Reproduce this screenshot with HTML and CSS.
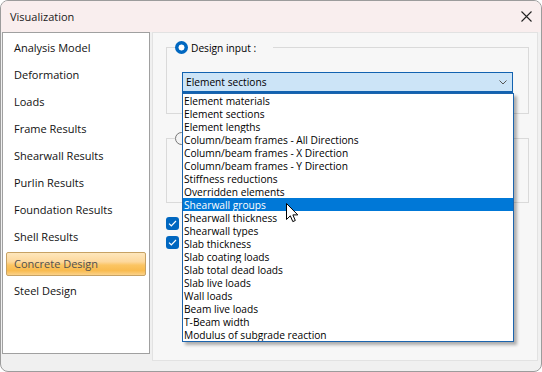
FILE: index.html
```html
<!DOCTYPE html>
<html>
<head>
<meta charset="utf-8">
<link rel="stylesheet" href="styles.css">
</head>
<body>
<div class="window">
  <div class="titlebar">
    <span class="title">Visualization</span>
    <svg class="close" width="11" height="11" viewBox="0 0 11 11"><path d="M0.5 0.5 L10.5 10.5 M10.5 0.5 L0.5 10.5" stroke="#222" stroke-width="1.1" fill="none"/></svg>
  </div>
  <div class="content">
    <ul class="nav">
      <li class="nav-item">Analysis Model</li>
      <li class="nav-item">Deformation</li>
      <li class="nav-item">Loads</li>
      <li class="nav-item">Frame Results</li>
      <li class="nav-item">Shearwall Results</li>
      <li class="nav-item">Purlin Results</li>
      <li class="nav-item">Foundation Results</li>
      <li class="nav-item">Shell Results</li>
      <li class="nav-item selected">Concrete Design</li>
      <li class="nav-item">Steel Design</li>
    </ul>
    <div class="panel">
      <fieldset class="group g1">
        <legend class="legend"><span class="opt"><span class="radio on"></span><span>Design input :</span></span></legend>
        <div class="group-body g1-body">
          <div class="combo">
            <span>Element sections</span>
            <svg class="chev" width="8" height="5" viewBox="0 0 8 5"><path d="M0.5 0.5 L4 4 L7.5 0.5" stroke="#555" stroke-width="1" fill="none"/></svg>
            <ul class="dropdown">
              <li>Element materials</li>
              <li>Element sections</li>
              <li>Element lengths</li>
              <li>Column/beam frames - All Directions</li>
              <li>Column/beam frames - X Direction</li>
              <li>Column/beam frames - Y Direction</li>
              <li>Stiffness reductions</li>
              <li>Overridden elements</li>
              <li class="hl">Shearwall groups</li>
              <li>Shearwall thickness</li>
              <li>Shearwall types</li>
              <li>Slab thickness</li>
              <li>Slab coating loads</li>
              <li>Slab total dead loads</li>
              <li>Slab live loads</li>
              <li>Wall loads</li>
              <li>Beam live loads</li>
              <li>T-Beam width</li>
              <li>Modulus of subgrade reaction</li>
            </ul>
          </div>
        </div>
      </fieldset>
      <fieldset class="group g2">
        <legend class="legend"><span class="opt"><span class="radio"></span></span></legend>
        <div class="group-body g2-body"></div>
      </fieldset>
      <div class="checks">
        <span class="check"><svg width="9" height="7" viewBox="0 0 9 7"><path d="M1 3.6 L3.3 5.8 L8 1" stroke="#fff" stroke-width="1.2" fill="none"/></svg></span>
        <span class="check"><svg width="9" height="7" viewBox="0 0 9 7"><path d="M1 3.6 L3.3 5.8 L8 1" stroke="#fff" stroke-width="1.2" fill="none"/></svg></span>
      </div>
      <svg class="cursor" width="13" height="20" viewBox="0 0 13 20"><path d="M0.5 0.5 L0.5 16.5 L4.3 12.8 L6.8 18.6 L9.3 17.5 L6.9 11.9 L11.8 11.9 Z" fill="#fff" stroke="#000" stroke-width="1" stroke-linejoin="round"/></svg>
    </div>
  </div>
</div>
</body>
</html>
```
FILE: styles.css
```css
body {
  margin: 0;
  background: #ffffff;
  font-family: "Open Sans", "Noto Sans", sans-serif;
  color: #000;
}
.window {
  width: 542px;
  height: 372px;
  box-sizing: border-box;
  border: 1px solid #9c9c9c;
  border-radius: 8px;
  background: #f0f0f0;
  overflow: hidden;
  display: flex;
  flex-direction: column;
}
.titlebar {
  height: 31px;
  flex: none;
  background: #f9eeee;
  display: flex;
  align-items: center;
  justify-content: space-between;
  padding: 0 9px;
}
.title {
  font-size: 11px;
  color: #1a1a1a;
}
.close {
  display: block;
}
.content {
  display: flex;
  align-items: flex-start;
  gap: 2px;
  padding-left: 1px;
}
.nav {
  width: 148px;
  height: 322px;
  box-sizing: border-box;
  margin: 0;
  padding: 3px;
  list-style: none;
  background: #fff;
  border: 1px solid #a0a0a0;
}
.nav-item {
  height: 24px;
  margin-bottom: 3px;
  box-sizing: border-box;
  border: 1px solid transparent;
  padding: 0 0 2px 7px;
  display: flex;
  align-items: center;
  font-size: 11px;
  font-weight: 500;
  color: #111;
}
.nav-item.selected {
  border-color: #c7a264;
  border-radius: 2px;
  background: linear-gradient(#fee7bd 0%, #fdd89c 40%, #fbc563 55%, #f9bb4f 80%, #fbd28a 100%);
  color: #505050;
}
.panel {
  width: 386px;
  height: 329px;
  box-sizing: border-box;
  border: 1px solid #e2e2e2;
  background: #f7f7f7;
  position: relative;
  padding: 8px 8px 0 13px;
}
.group {
  margin: 0;
  padding: 0;
  border: 1px solid #dadada;
  min-width: 0;
}
.legend {
  padding: 0;
  margin-left: 8px;
  width: 98px;
}
.opt {
  display: flex;
  align-items: center;
  height: 13px;
  gap: 3px;
  font-size: 10.2px;
}
.radio {
  width: 13px;
  height: 13px;
  box-sizing: border-box;
  border-radius: 50%;
  border: 1px solid #777;
  background: #f4f4f4;
  flex: none;
}
.radio.on {
  border: none;
  background: radial-gradient(circle, #fff 0 2.7px, #0067c0 3.3px);
}
.g1-body {
  padding: 18px 15px 20px 15px;
}
.g2 {
  margin-top: 18px;
}
.g2-body {
  height: 57px;
}
.combo {
  position: relative;
  height: 21px;
  box-sizing: border-box;
  border: 1px solid #1262b0;
  border-bottom-width: 2px;
  background: #cce4f7;
  display: flex;
  align-items: center;
  justify-content: space-between;
  padding: 0 5px 0 3px;
  font-size: 10.2px;
}
.chev {
  display: block;
}
.dropdown {
  position: absolute;
  left: -1px;
  top: calc(100% + 2px);
  width: 332px;
  box-sizing: border-box;
  margin: 0;
  padding: 0;
  list-style: none;
  background: #fff;
  border: 1px solid #1c64ad;
  box-shadow: 3px 3px 3px rgba(0, 0, 0, 0.3);
  z-index: 10;
}
.dropdown li {
  height: 13px;
  line-height: 15px;
  padding-left: 1px;
  font-size: 10.2px;
  white-space: nowrap;
  overflow: hidden;
}
.dropdown li.hl {
  background: #0078d7;
  color: #fff;
}
.checks {
  margin-top: 14px;
  display: flex;
  flex-direction: column;
  gap: 6px;
}
.check {
  width: 13px;
  height: 13px;
  border-radius: 3px;
  background: #0067c0;
  display: flex;
  align-items: center;
  justify-content: center;
}
.check svg {
  display: block;
}
.cursor {
  position: absolute;
  left: 133px;
  top: 170px;
  z-index: 20;
}
```
